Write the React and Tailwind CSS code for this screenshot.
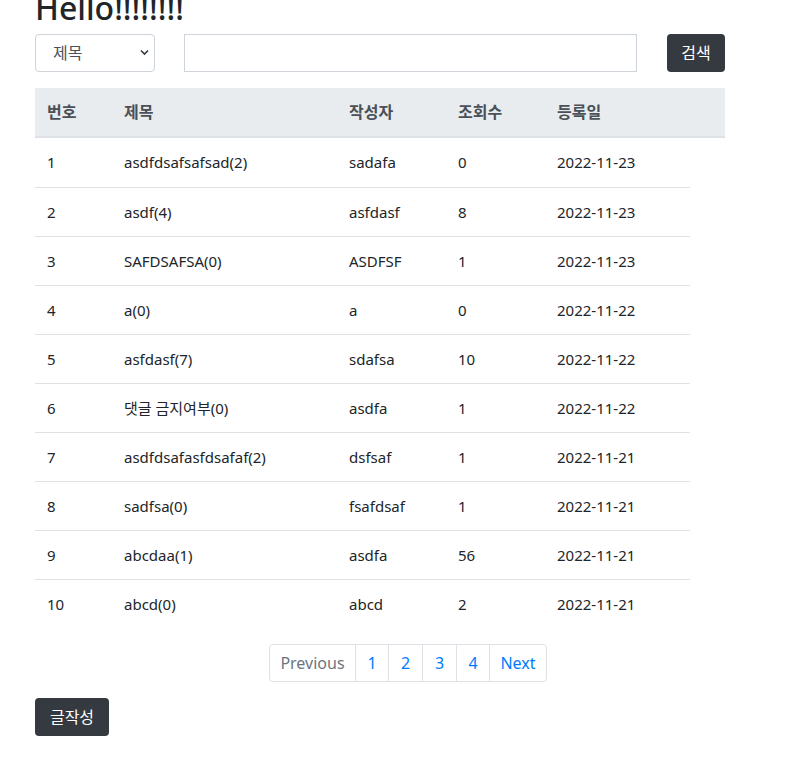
import React from 'react';

const rows = [
  { no: 1, title: 'asdfdsafsafsad(2)', writer: 'sadafa', views: 0, date: '2022-11-23' },
  { no: 2, title: 'asdf(4)', writer: 'asfdasf', views: 8, date: '2022-11-23' },
  { no: 3, title: 'SAFDSAFSA(0)', writer: 'ASDFSF', views: 1, date: '2022-11-23' },
  { no: 4, title: 'a(0)', writer: 'a', views: 0, date: '2022-11-22' },
  { no: 5, title: 'asfdasf(7)', writer: 'sdafsa', views: 10, date: '2022-11-22' },
  { no: 6, title: '댓글 금지여부(0)', writer: 'asdfa', views: 1, date: '2022-11-22' },
  { no: 7, title: 'asdfdsafasfdsafaf(2)', writer: 'dsfsaf', views: 1, date: '2022-11-21' },
  { no: 8, title: 'sadfsa(0)', writer: 'fsafdsaf', views: 1, date: '2022-11-21' },
  { no: 9, title: 'abcdaa(1)', writer: 'asdfa', views: 56, date: '2022-11-21' },
  { no: 10, title: 'abcd(0)', writer: 'abcd', views: 2, date: '2022-11-21' },
];

function App() {
  return (
    <div className="min-h-screen bg-white pl-[35px] text-[#212529] font-['Noto_Sans','Noto_Sans_CJK_KR',sans-serif]">
      {/* 제목 */}
      <h1 className="-mt-[11px] mb-[7px] text-[32px] font-medium leading-[38px]">Hello!!!!!!!!</h1>

      {/* 검색 */}
      <div className="flex w-[690px] items-center">
        <div className="relative h-[38px] w-[120px]">
          <select className="h-full w-full appearance-none rounded-[4px] border border-[#ced4da] bg-white pl-[17px] text-[16px] text-[#495057]">
            <option>제목</option>
          </select>
          <svg className="pointer-events-none absolute right-[6px] top-[15px]" width="9" height="7" viewBox="0 0 9 7">
            <path d="M1 1.5 L4.5 5 L8 1.5" fill="none" stroke="#343a40" strokeWidth="1.6" />
          </svg>
        </div>
        <input className="ml-[29px] h-[38px] w-[453px] border border-[#ced4da] bg-white" />
        <button className="ml-[30px] h-[38px] w-[58px] rounded-[4px] bg-[#343a40] text-[16px] text-white">검색</button>
      </div>

      {/* 목록 */}
      <div className="mt-[16px]">
        <div className="grid h-[50px] w-[690px] grid-cols-[77px_225px_109px_99px_180px] items-center border-b-2 border-[#dee2e6] bg-[#e9ecef] text-[16px] font-semibold text-[#495057]">
          <div className="px-3">번호</div>
          <div className="px-3">제목</div>
          <div className="px-3">작성자</div>
          <div className="px-3">조회수</div>
          <div className="px-3">등록일</div>
        </div>
        {rows.map((r, i) => (
          <div
            key={r.no}
            className={`grid h-[49px] w-[655px] grid-cols-[77px_225px_109px_99px_145px] items-center text-[15px] ${i > 0 ? 'border-t border-[#dee2e6]' : ''}`}
          >
            <div className="px-3">{r.no}</div>
            <div className="px-3">{r.title}</div>
            <div className="px-3">{r.writer}</div>
            <div className="px-3">{r.views}</div>
            <div className="px-3">{r.date}</div>
          </div>
        ))}
      </div>

      {/* 페이지 */}
      <div className="mt-[16px] flex w-[690px] justify-center">
        <div className="ml-[56px] flex h-[38px] overflow-hidden rounded-[4px] border border-[#dee2e6] text-[16px]">
          <span className="flex w-[85px] items-center justify-center text-[#6c757d]">Previous</span>
          <span className="flex w-[33px] items-center justify-center border-l border-[#dee2e6] text-[#007bff]">1</span>
          <span className="flex w-[34px] items-center justify-center border-l border-[#dee2e6] text-[#007bff]">2</span>
          <span className="flex w-[34px] items-center justify-center border-l border-[#dee2e6] text-[#007bff]">3</span>
          <span className="flex w-[33px] items-center justify-center border-l border-[#dee2e6] text-[#007bff]">4</span>
          <span className="flex w-[57px] items-center justify-center border-l border-[#dee2e6] text-[#007bff]">Next</span>
        </div>
      </div>

      <button className="mt-[16px] h-[38px] w-[74px] rounded-[4px] bg-[#343a40] text-[16px] text-white">글작성</button>
    </div>
  );
}

export default App;
